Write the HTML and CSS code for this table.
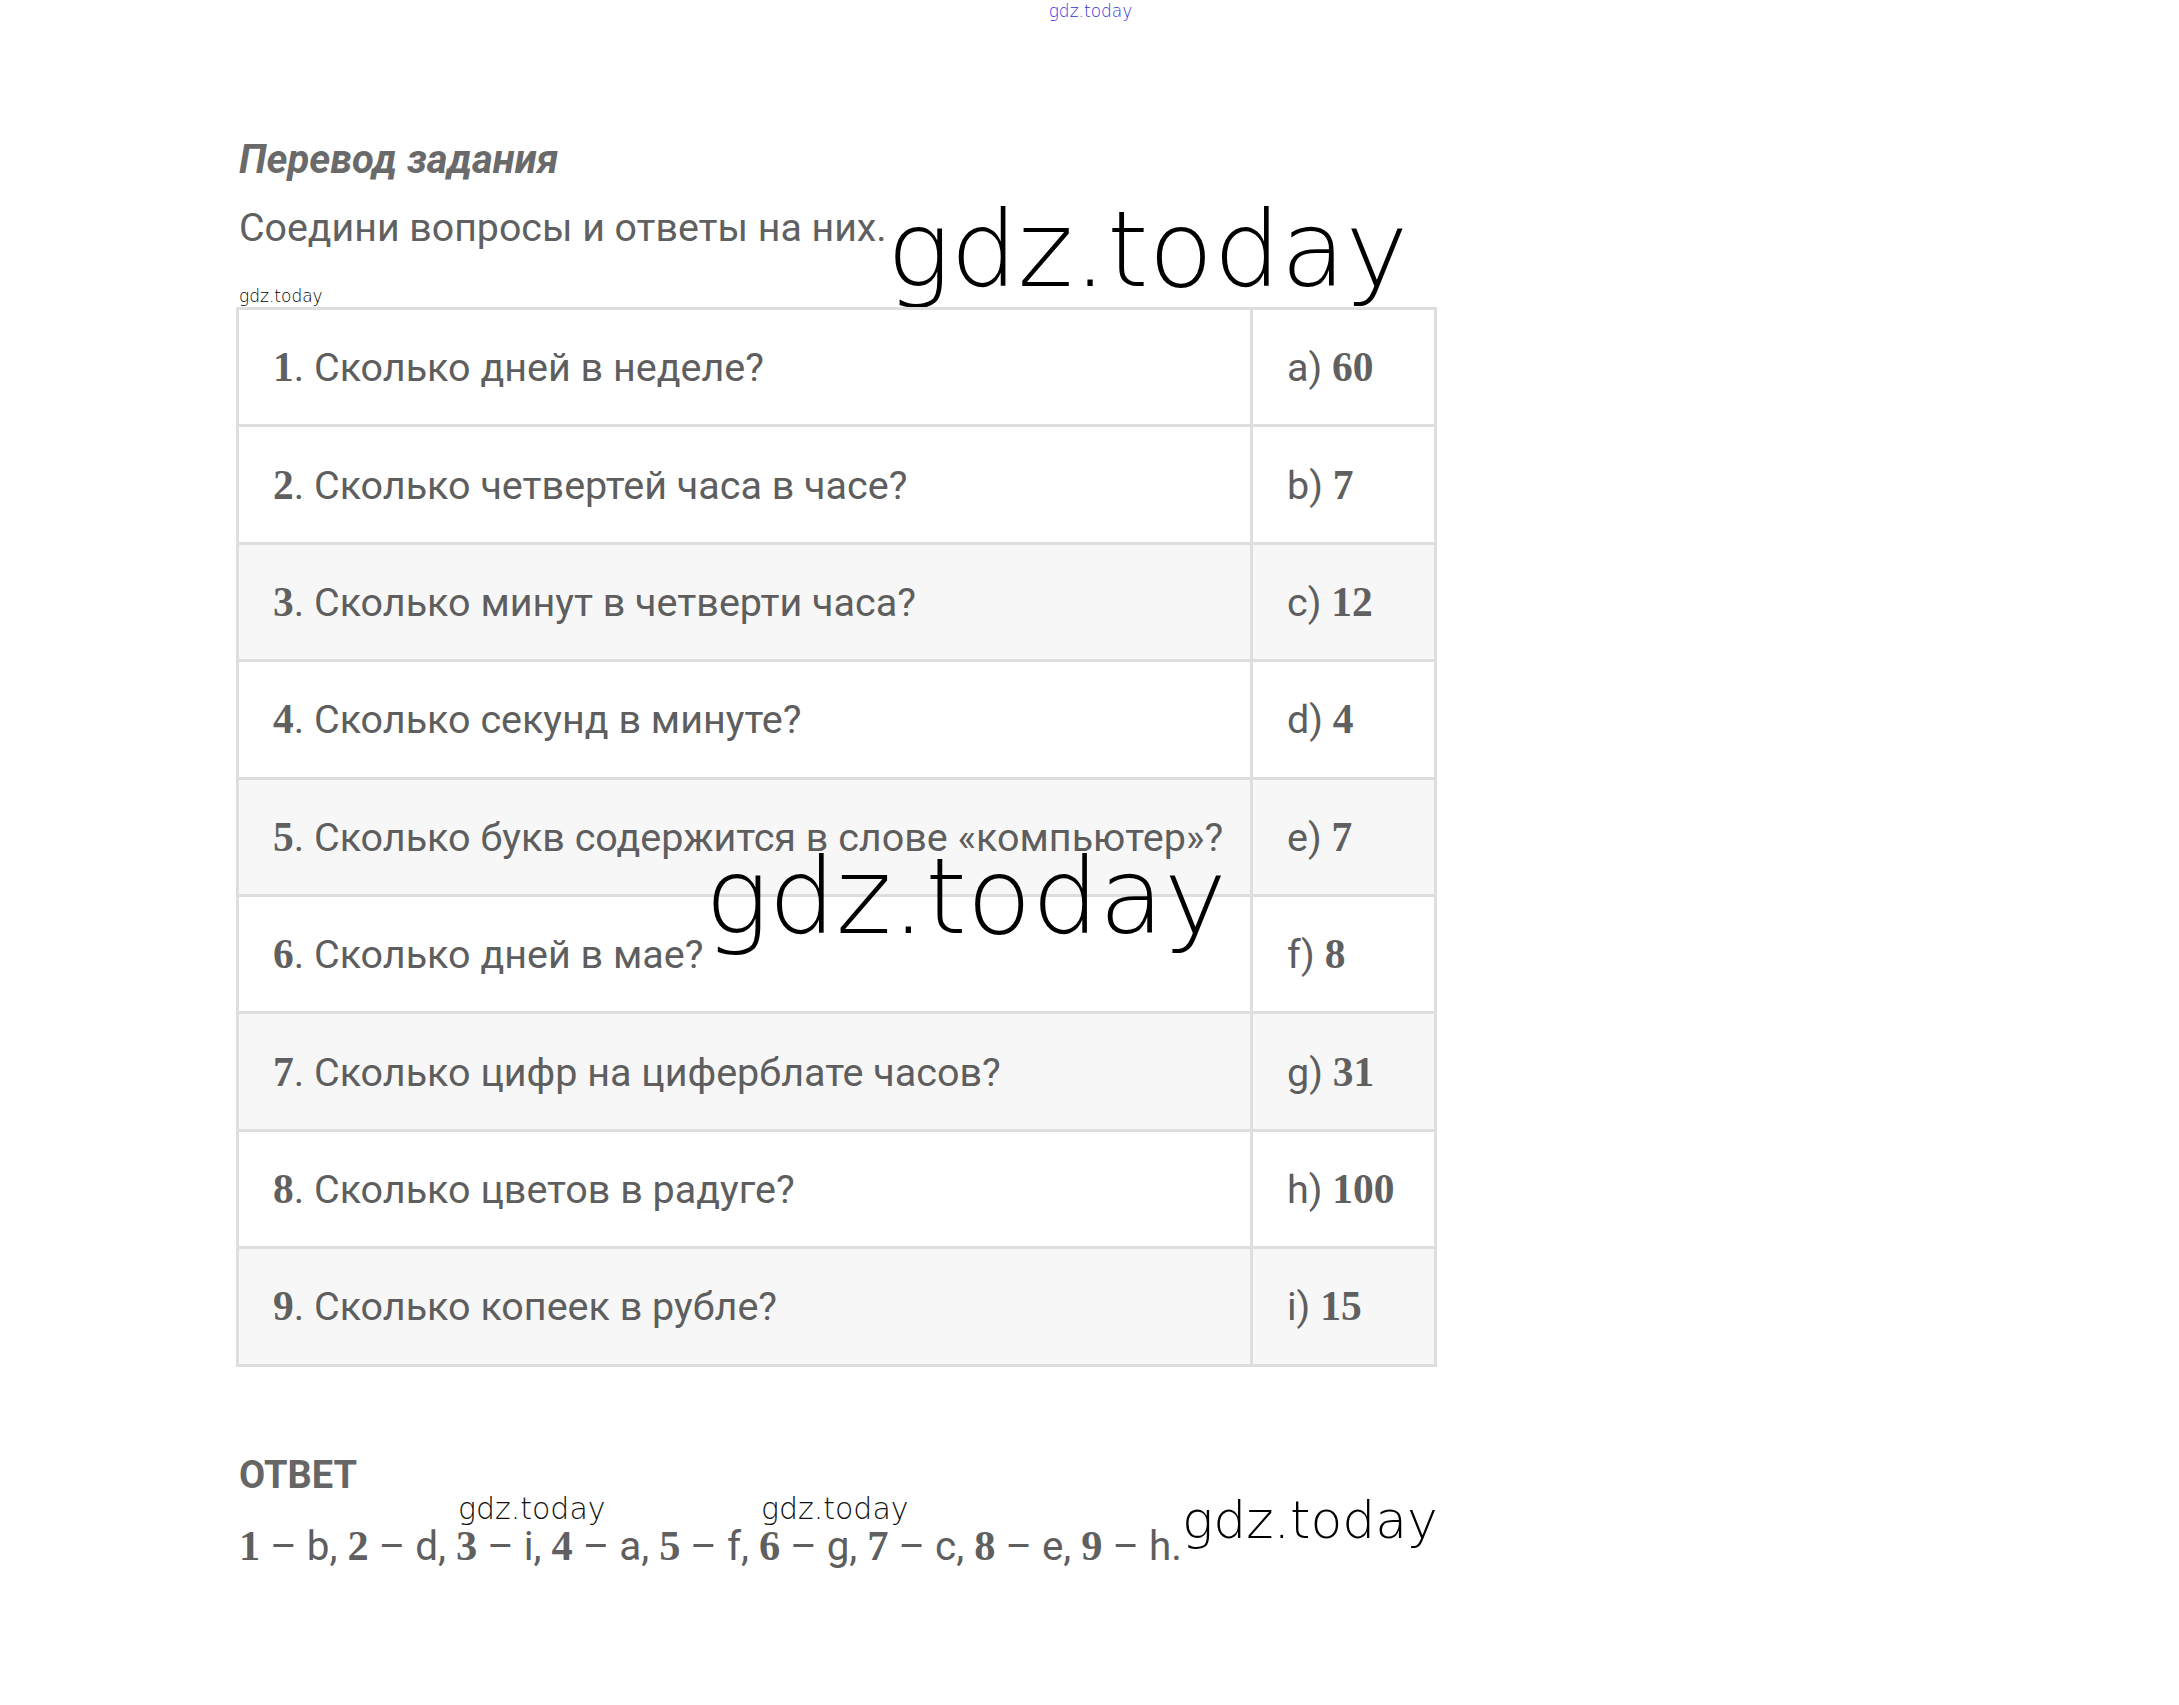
FILE: index.html
```html
<!DOCTYPE html>
<html lang="ru">
<head>
<meta charset="utf-8">
<title>Перевод задания</title>
<link rel="stylesheet" href="styles.css">
</head>
<body>
<div class="top-mark">gdz.today</div>
<main class="content">
  <h2 class="title">Перевод задания</h2>
  <p class="lead">Соедини вопросы и ответы на них.<span class="wm-big">gdz.today</span></p>
  <div class="wm-tiny">gdz.today</div>
  <div class="table-wrap">
    <table class="qa">
      <tbody>
        <tr><td class="q"><b class="n">1</b>. Сколько дней в неделе?</td><td class="a">a) <b class="n">60</b></td></tr>
        <tr><td class="q"><b class="n">2</b>. Сколько четвертей часа в часе?</td><td class="a">b) <b class="n">7</b></td></tr>
        <tr class="alt"><td class="q"><b class="n">3</b>. Сколько минут в четверти часа?</td><td class="a">c) <b class="n">12</b></td></tr>
        <tr><td class="q"><b class="n">4</b>. Сколько секунд в минуте?</td><td class="a">d) <b class="n">4</b></td></tr>
        <tr class="alt"><td class="q"><b class="n">5</b>. Сколько букв содержится в слове «компьютер»?</td><td class="a">e) <b class="n">7</b></td></tr>
        <tr><td class="q"><b class="n">6</b>. Сколько дней в мае?</td><td class="a">f) <b class="n">8</b></td></tr>
        <tr class="alt"><td class="q"><b class="n">7</b>. Сколько цифр на циферблате часов?</td><td class="a">g) <b class="n">31</b></td></tr>
        <tr><td class="q"><b class="n">8</b>. Сколько цветов в радуге?</td><td class="a">h) <b class="n">100</b></td></tr>
        <tr class="alt"><td class="q"><b class="n">9</b>. Сколько копеек в рубле?</td><td class="a">i) <b class="n">15</b></td></tr>
      </tbody>
    </table>
    <span class="wm-mid">gdz.today</span>
  </div>
  <h3 class="answer-title">ОТВЕТ</h3>
  <p class="answer"><b class="n">1</b> – b, <b class="n">2</b> – d, <span class="anchor"><span class="wm-small">gdz.today</span><b class="n">3</b></span> – i, <b class="n">4</b> – a, <b class="n">5</b> – f, <span class="anchor"><span class="wm-small">gdz.today</span><b class="n">6</b></span> – g, <b class="n">7</b> – c, <b class="n">8</b> – e, <b class="n">9</b> – h.<span class="wm-end">gdz.today</span></p>
</main>
</body>
</html>
```

FILE: styles.css
```css
html, body {
  margin: 0;
  padding: 0;
  background: #ffffff;
}

body {
  width: 2179px;
  min-height: 1705px;
  font-family: Roboto, "Liberation Sans", sans-serif;
  color: #5b5b5b;
}

.top-mark {
  text-align: center;
  font-family: "DejaVu Sans", sans-serif;
  font-weight: 200;
  font-size: 17px;
  line-height: 22px;
  color: #3434d8;
  padding-left: 2px;
}

.content {
  margin-left: 236px;
  width: 1201px;
}

.title {
  margin: 118px 0 0 3px;
  font-size: 40px;
  line-height: 40px;
  font-weight: 700;
  font-style: italic;
  color: #6a6a6a;
}

.lead {
  margin: 26px 0 0 3px;
  font-size: 39.3px;
  line-height: 44px;
  color: #606060;
  white-space: nowrap;
}

.wm-big {
  font-family: "DejaVu Sans", sans-serif;
  font-weight: 200;
  font-size: 106px;
  color: #000;
  vertical-align: -45px;
  line-height: 44px;
}

.wm-tiny {
  margin: 13px 0 0 3px;
  font-family: "DejaVu Sans", sans-serif;
  font-weight: 200;
  font-size: 17px;
  line-height: 22px;
  color: #000;
}

.table-wrap {
  position: relative;
}

.qa {
  width: 1201px;
  border-collapse: collapse;
  border: 3px solid #dedede;
}

.qa td {
  border: 3px solid #dedede;
  height: 114.4px;
  padding: 0 0 0 34px;
  font-size: 39.5px;
  color: #5e5e5e;
  vertical-align: middle;
}

.qa td.a {
  width: 147px;
}

.qa tr.alt td {
  background: #f7f7f7;
}

.n {
  font-family: "Liberation Serif", serif;
  font-weight: 700;
  font-size: 1.05em;
  color: #606060;
}

.wm-mid {
  position: absolute;
  left: 469px;
  top: 537px;
  font-family: "DejaVu Sans", sans-serif;
  font-weight: 200;
  font-size: 106px;
  line-height: 1;
  color: #000;
}

.answer-title {
  margin: 88px 0 0 3px;
  font-size: 38px;
  line-height: 40px;
  font-weight: 700;
  color: #666;
}

.answer {
  margin: 5px 0 0 3px;
  font-size: 40.4px;
  line-height: 50px;
  color: #5e5e5e;
  white-space: nowrap;
}

.anchor {
  position: relative;
}

.wm-small {
  position: absolute;
  left: 2px;
  top: -29px;
  font-family: "DejaVu Sans", sans-serif;
  font-weight: 200;
  font-size: 30px;
  line-height: 1;
  color: #111;
  white-space: nowrap;
}

.wm-end {
  font-family: "DejaVu Sans", sans-serif;
  font-weight: 200;
  font-size: 52px;
  color: #000;
  vertical-align: 22px;
  line-height: 40px;
}
```
